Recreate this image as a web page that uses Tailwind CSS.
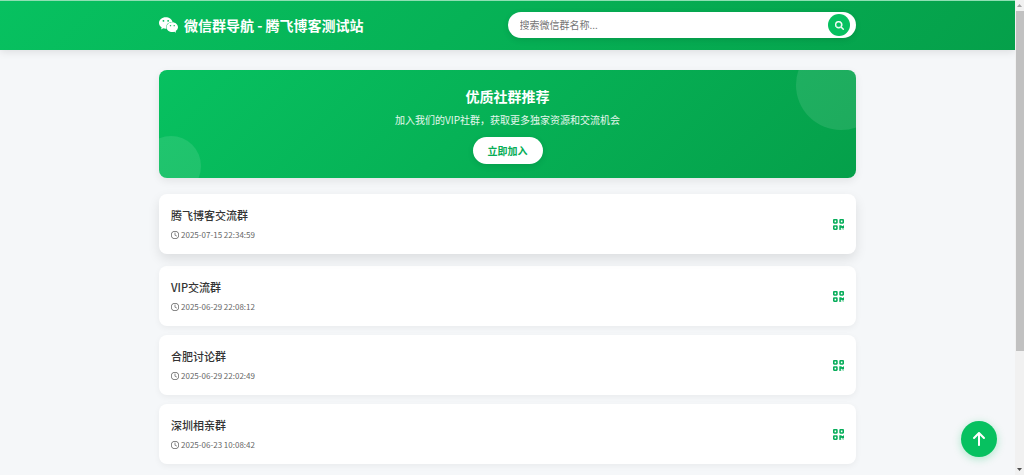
<!DOCTYPE html>
<html lang="zh-CN">
<head>
    <meta charset="UTF-8">
    <meta name="viewport" content="width=device-width, initial-scale=1.0">
    <title>微信群导航 - 腾飞博客测试站</title>
    <script src="https://cdn.jsdelivr.net/npm/@tailwindcss/browser@4"></script>
</head>
<body class="flex min-h-screen bg-[#f5f7f9] font-['Noto_Sans_CJK_SC',sans-serif] text-[#333]">
    <!-- Shared icons -->
    <svg class="hidden">
        <symbol id="icon-clock" viewBox="0 0 512 512">
            <path d="M464 256A208 208 0 1 1 48 256a208 208 0 1 1 416 0zM0 256a256 256 0 1 0 512 0A256 256 0 1 0 0 256zM232 120V256c0 8 4 15.500 10.700 20l96 64c11 7.400 25.900 4.400 33.300-6.700s4.400-25.900-6.700-33.300L280 243.200V120c0-13.300-10.700-24-24-24s-24 10.700-24 24z"/>
        </symbol>
        <symbol id="icon-qrcode" viewBox="0 32 448 448">
            <path d="M0 80C0 53.500 21.500 32 48 32h96c26.500 0 48 21.500 48 48v96c0 26.500-21.500 48-48 48H48c-26.500 0-48-21.500-48-48V80zM64 96v64h64V96H64zM0 336c0-26.500 21.500-48 48-48h96c26.500 0 48 21.500 48 48v96c0 26.500-21.500 48-48 48H48c-26.500 0-48-21.500-48-48V336zm64 16v64h64V352H64zM304 32h96c26.500 0 48 21.500 48 48v96c0 26.500-21.500 48-48 48H304c-26.500 0-48-21.500-48-48V80c0-26.500 21.500-48 48-48zm80 64H320v64h64V96zM256 304c0-8.800 7.200-16 16-16h64c8.800 0 16 7.200 16 16s7.200 16 16 16h32c8.800 0 16-7.200 16-16s7.200-16 16-16s16 7.200 16 16v96c0 8.800-7.200 16-16 16H368c-8.800 0-16-7.200-16-16s-7.200-16-16-16s-16 7.200-16 16v64c0 8.800-7.200 16-16 16H272c-8.800 0-16-7.200-16-16V304zM368 480a16 16 0 1 1 0-32 16 16 0 1 1 0 32zm64 0a16 16 0 1 1 0-32 16 16 0 1 1 0 32z"/>
        </symbol>
    </svg>

    <div class="min-w-0 flex-1">
        <header class="border-t border-[#8fdfb3] bg-linear-135 from-[#07c160] to-[#05a04a] shadow-[0_2px_8px_rgba(0,0,0,0.1)]">
            <div class="mx-auto grid max-w-[697px] grid-cols-2 items-center pt-[11px] pb-3">
                <h1 class="flex items-center gap-[6px] text-[14px] leading-6 font-bold text-white">
                    <svg class="h-4 w-[19px] fill-current" viewBox="13 32 550 448" aria-hidden="true">
                        <path d="M385.2 167.6c6.400 0 12.600.3 18.800 1.100C387.400 90.300 303.300 32 207.700 32 100.500 32 13 104.800 13 197.400c0 53.400 29.300 97.500 77.900 131.600l-19.300 58.600 68-34.100c24.400 4.800 43.800 9.700 68.200 9.700 6.200 0 12.100-.3 18.300-.8-4-12.900-6.200-26.600-6.200-40.800-.1-84.900 72.900-154 165.300-154zm-104.500-52.900c14.500 0 24.200 9.700 24.200 24.400 0 14.500-9.700 24.200-24.200 24.200-14.800 0-29.300-9.700-29.300-24.200.1-14.700 14.600-24.400 29.300-24.400zm-136.400 48.600c-14.500 0-29.300-9.700-29.300-24.200 0-14.800 14.800-24.400 29.300-24.400 14.800 0 24.400 9.700 24.400 24.400 0 14.600-9.600 24.200-24.400 24.200zM563 319.400c0-77.900-77.900-141.300-165.400-141.300-92.700 0-165.400 63.400-165.400 141.300S305 460.700 397.600 460.700c19.300 0 38.900-5.100 58.600-9.900l53.400 29.300-14.800-48.600C534 402.100 563 363.200 563 319.400zm-219.100-24.500c-9.700 0-19.300-9.700-19.300-19.600 0-9.700 9.700-19.300 19.300-19.300 14.800 0 24.400 9.700 24.400 19.300 0 10-9.700 19.600-24.400 19.600zm107.100 0c-9.700 0-19.300-9.700-19.300-19.600 0-9.700 9.700-19.300 19.300-19.300 14.500 0 24.400 9.700 24.400 19.300.1 10-9.900 19.600-24.400 19.600z"/>
                    </svg>
                    微信群导航 - 腾飞博客测试站
                </h1>
                <form class="flex items-center rounded-full bg-white py-[2px] pr-[6px] pl-3 shadow-[0_2px_6px_rgba(0,0,0,0.1)]">
                    <input type="text" aria-label="搜索微信群名称" placeholder="搜索微信群名称..." class="min-w-0 flex-1 text-[10px] leading-4 outline-none placeholder:text-[#757575]">
                    <button type="submit" aria-label="搜索" class="flex size-[22px] items-center justify-center rounded-full bg-[#07c160] text-white">
                        <svg class="size-[9px] fill-current stroke-current stroke-[24]" viewBox="0 0 512 512"><path d="M416 208c0 45.900-14.900 88.300-40 122.700L502.600 457.400c12.500 12.500 12.500 32.800 0 45.300s-32.800 12.500-45.300 0L330.700 376c-34.400 25.200-76.800 40-122.700 40C93.100 416 0 322.900 0 208S93.100 0 208 0S416 93.100 416 208zM208 352a144 144 0 1 0 0-288 144 144 0 1 0 0 288z"/></svg>
                    </button>
                </form>
            </div>
        </header>

        <main class="mx-auto max-w-[697px] pt-5">
            <section class="relative overflow-hidden rounded-lg bg-linear-135 from-[#07c160] to-[#05a04a] py-[14px] text-center text-white shadow-[0_3px_9px_rgba(0,0,0,0.08)]">
                <span class="absolute -top-[30px] -right-[30px] size-[90px] rounded-full bg-white/10"></span>
                <span class="absolute -bottom-[18px] -left-[18px] size-[60px] rounded-full bg-white/10"></span>
                <h2 class="text-[14px] leading-6 font-bold">优质社群推荐</h2>
                <p class="mt-1 text-[10px] leading-4 text-white/90">加入我们的VIP社群，获取更多独家资源和交流机会</p>
                <button type="button" class="mx-auto mt-[9px] block rounded-full bg-white px-[15px] py-[5px] text-[10px] leading-[17px] font-bold text-[#06ad56] shadow-[0_2px_6px_rgba(0,0,0,0.1)]">立即加入</button>
            </section>

            <ul class="mt-[19px] flex flex-col gap-[9px]">
                <!-- first card is in its raised state -->
                <li class="flex -translate-y-[3px] items-center justify-between rounded-lg bg-white p-3 shadow-[0_5px_12px_rgba(0,0,0,0.1)]">
                    <div>
                        <h3 class="text-[11px] leading-[18px] font-medium">腾飞博客交流群</h3>
                        <p class="mt-1 flex items-center gap-[2px] text-[8px] leading-[14px] text-[#666]"><svg class="size-2 fill-current"><use href="#icon-clock"/></svg>2025-07-15 22:34:59</p>
                    </div>
                    <svg class="size-[11px] fill-[#07ad5a]"><use href="#icon-qrcode"/></svg>
                </li>
                <li class="flex items-center justify-between rounded-lg bg-white p-3 shadow-[0_2px_6px_rgba(0,0,0,0.05)]">
                    <div>
                        <h3 class="text-[11px] leading-[18px] font-medium">VIP交流群</h3>
                        <p class="mt-1 flex items-center gap-[2px] text-[8px] leading-[14px] text-[#666]"><svg class="size-2 fill-current"><use href="#icon-clock"/></svg>2025-06-29 22:08:12</p>
                    </div>
                    <svg class="size-[11px] fill-[#07ad5a]"><use href="#icon-qrcode"/></svg>
                </li>
                <li class="flex items-center justify-between rounded-lg bg-white p-3 shadow-[0_2px_6px_rgba(0,0,0,0.05)]">
                    <div>
                        <h3 class="text-[11px] leading-[18px] font-medium">合肥讨论群</h3>
                        <p class="mt-1 flex items-center gap-[2px] text-[8px] leading-[14px] text-[#666]"><svg class="size-2 fill-current"><use href="#icon-clock"/></svg>2025-06-29 22:02:49</p>
                    </div>
                    <svg class="size-[11px] fill-[#07ad5a]"><use href="#icon-qrcode"/></svg>
                </li>
                <li class="flex items-center justify-between rounded-lg bg-white p-3 shadow-[0_2px_6px_rgba(0,0,0,0.05)]">
                    <div>
                        <h3 class="text-[11px] leading-[18px] font-medium">深圳相亲群</h3>
                        <p class="mt-1 flex items-center gap-[2px] text-[8px] leading-[14px] text-[#666]"><svg class="size-2 fill-current"><use href="#icon-clock"/></svg>2025-06-23 10:08:42</p>
                    </div>
                    <svg class="size-[11px] fill-[#07ad5a]"><use href="#icon-qrcode"/></svg>
                </li>
            </ul>
        </main>
    </div>

    <!-- Scrollbar -->
    <div class="flex w-[9px] flex-col items-center bg-[#f1f1f1]" aria-hidden="true">
        <svg class="h-[11px] w-[5px] fill-[#a3a3a3]" viewBox="0 0 5 11"><path d="M0 7L2.500 4L5 7z"/></svg>
        <div class="flex w-full flex-1 flex-col items-center">
            <div class="h-3/4 w-2 bg-[#c1c1c1]"></div>
        </div>
        <svg class="h-[11px] w-[5px] fill-[#505050]" viewBox="0 0 5 11"><path d="M0 4L2.500 7L5 4z"/></svg>
    </div>

    <button type="button" aria-label="返回顶部" class="fixed right-[27px] bottom-[18px] flex size-9 items-center justify-center rounded-full bg-[#07c160] text-white shadow-[0_2px_9px_rgba(7,193,96,0.3)]">
        <svg class="h-[14px] w-3 fill-current" viewBox="0 32 384 448"><path d="M214.600 41.400c-12.500-12.500-32.800-12.500-45.300 0l-160 160c-12.500 12.500-12.500 32.800 0 45.300s32.800 12.500 45.300 0L160 141.200V448c0 17.700 14.300 32 32 32s32-14.300 32-32V141.200L329.400 246.600c12.500 12.500 32.800 12.500 45.300 0s12.500-32.800 0-45.300l-160-160z"/></svg>
    </button>
</body>
</html>
